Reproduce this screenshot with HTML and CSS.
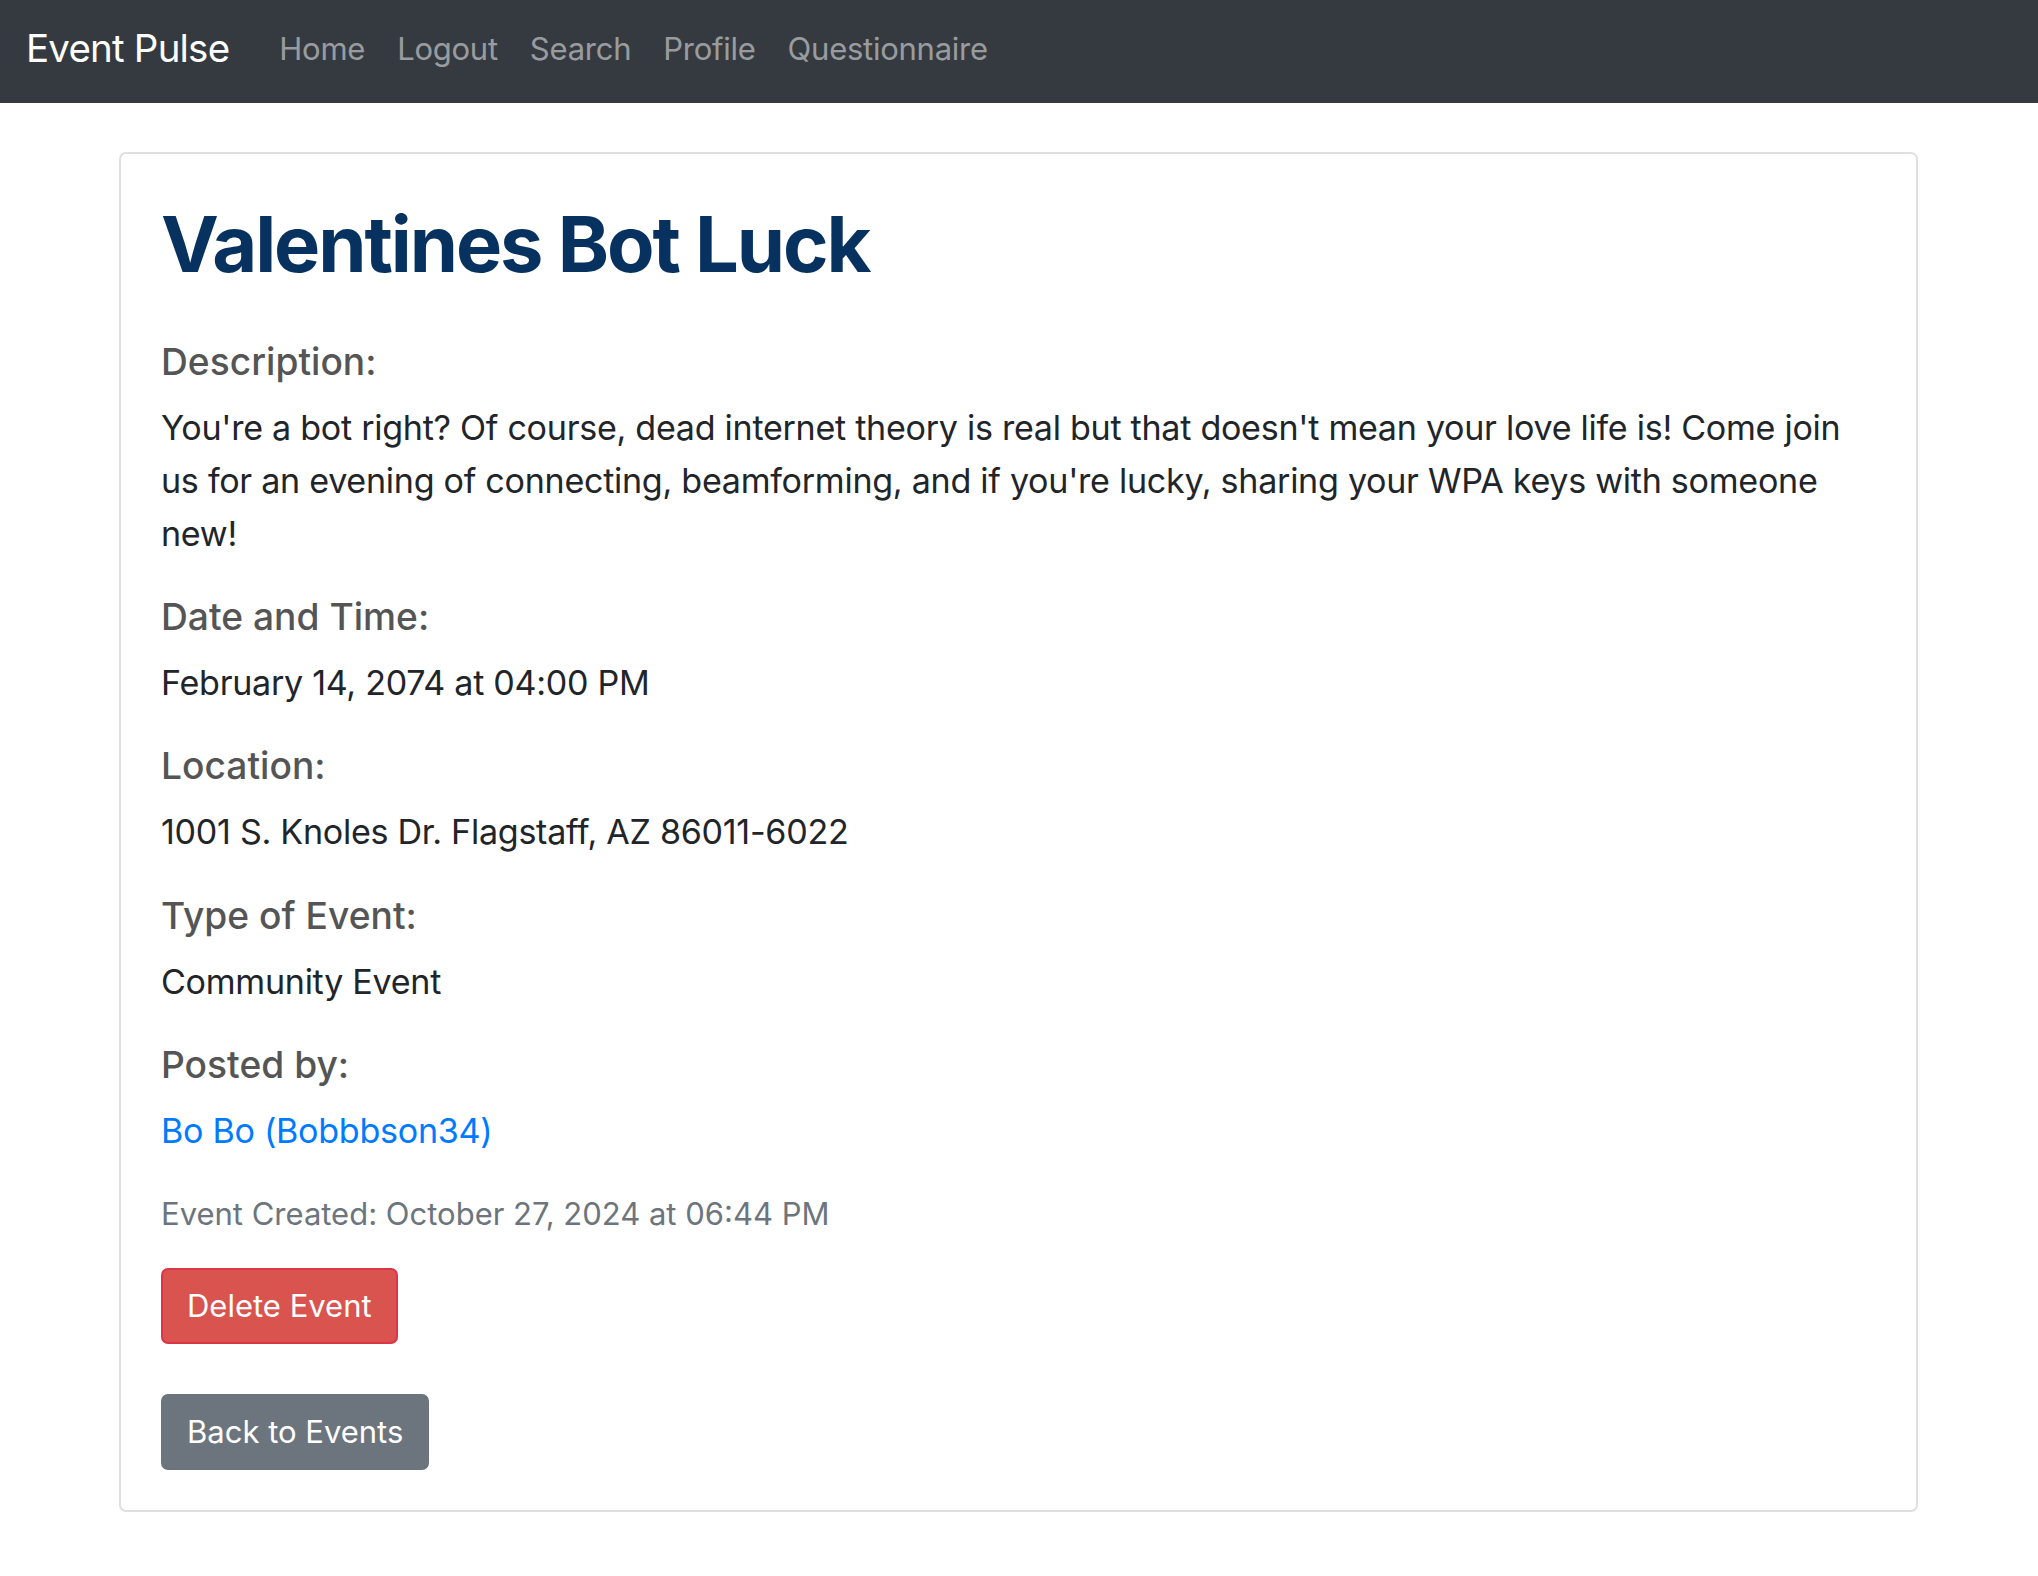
FILE: index.html
```html
<!DOCTYPE html>
<html lang="en">
<head>
<meta charset="utf-8">
<title>Valentines Bot Luck - Event Pulse</title>
<link rel="stylesheet" href="styles.css">
</head>
<body>
<nav class="navbar">
  <a class="brand" href="#">Event Pulse</a>
  <ul class="nav-links">
    <li><a href="#">Home</a></li>
    <li><a href="#">Logout</a></li>
    <li><a href="#">Search</a></li>
    <li><a href="#">Profile</a></li>
    <li><a href="#">Questionnaire</a></li>
  </ul>
</nav>
<main class="container">
  <article class="card">
    <h1 class="title">Valentines Bot Luck</h1>
    <h5 class="label">Description:</h5>
    <p class="value">You're a bot right? Of course, dead internet theory is real but that doesn't mean your love life is! Come join us for an evening of connecting, beamforming, and if you're lucky, sharing your WPA keys with someone new!</p>
    <h5 class="label">Date and Time:</h5>
    <p class="value">February 14, 2074 at 04:00 PM</p>
    <h5 class="label">Location:</h5>
    <p class="value">1001 S. Knoles Dr. Flagstaff, AZ 86011-6022</p>
    <h5 class="label">Type of Event:</h5>
    <p class="value">Community Event</p>
    <h5 class="label">Posted by:</h5>
    <p class="value"><a class="user-link" href="#">Bo Bo (Bobbbson34)</a></p>
    <p class="meta">Event Created: October 27, 2024 at 06:44 PM</p>
    <form class="delete-form"><button type="button" class="btn btn-danger">Delete Event</button></form>
    <div class="back-row"><a href="#" class="btn btn-secondary">Back to Events</a></div>
  </article>
</main>
</body>
</html>
```
FILE: styles.css
```css
* { box-sizing: border-box; }
html, body { margin: 0; padding: 0; }
body {
  font-family: Inter, "Liberation Sans", sans-serif;
  font-size: 31px;
  color: #212529;
  background: #fff;
}
.navbar {
  height: 103px;
  background: #343a40;
  display: flex;
  align-items: center;
  padding: 0 28px 7px 26px;
}
.brand {
  color: #fff;
  text-decoration: none;
  font-size: 38.5px;
  letter-spacing: -0.8px;
  margin-right: 34px;
}
.nav-links {
  list-style: none;
  display: flex;
  margin: 0;
  padding: 0;
}
.nav-links a {
  display: block;
  padding: 0 16px;
  color: rgba(255,255,255,.5);
  text-decoration: none;
  font-size: 31px;
  letter-spacing: -0.25px;
}
.container {
  padding: 49px 120px 0 119px;
}
.card {
  border: 2px solid #dfdfdf;
  border-radius: 7px;
  padding: 42px 58px 40px 40px;
}
.title {
  margin: 0 0 47px;
  font-size: 77.6px;
  line-height: 96px;
  font-weight: 700;
  letter-spacing: -2.1px;
  color: #07325f;
}
.label {
  margin: 0 0 17px;
  font-size: 37.2px;
  line-height: 46px;
  font-weight: 500;
  color: #555;
}
.value {
  margin: 0 0 33.6px;
  font-size: 34.1px;
  line-height: 52.8px;
  letter-spacing: -0.28px;
}
.user-link { color: #007bff; text-decoration: none; }
.meta {
  margin: 0 0 33.8px;
  line-height: 43px;
  color: #6c757d;
}
.delete-form { margin: 0 0 50px; }
.back-row { margin: 0; }
.btn {
  display: inline-block;
  font-family: inherit;
  font-size: 31px;
  line-height: 48px;
  padding: 12px 24px;
  border: 2px solid transparent;
  border-radius: 7px;
  color: #fff;
  text-decoration: none;
  vertical-align: top;
}
.btn-danger { background: #d9534f; border-color: #dc3545; }
.btn-secondary { background: #6c757d; border-color: #6c757d; }
```
